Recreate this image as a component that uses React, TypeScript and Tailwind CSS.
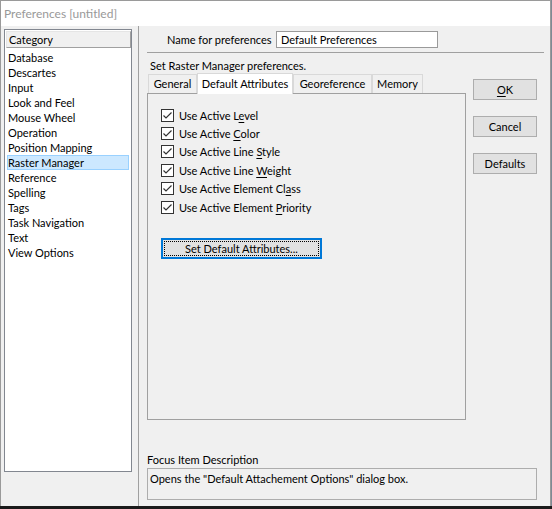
import React from "react"

const categories = [
  "Database",
  "Descartes",
  "Input",
  "Look and Feel",
  "Mouse Wheel",
  "Operation",
  "Position Mapping",
  "Raster Manager",
  "Reference",
  "Spelling",
  "Tags",
  "Task Navigation",
  "Text",
  "View Options",
]

// [before, mnemonic letter, after]
const options: [string, string, string][] = [
  ["Use Active L", "e", "vel"],
  ["Use Active ", "C", "olor"],
  ["Use Active Line ", "S", "tyle"],
  ["Use Active Line ", "W", "eight"],
  ["Use Active Element Cl", "a", "ss"],
  ["Use Active Element ", "P", "riority"],
]

const tabs = [
  { label: "General", w: "w-[49px]" },
  { label: "Default Attributes", w: "w-[96px]", active: true },
  { label: "Georeference", w: "w-[79px]" },
  { label: "Memory", w: "w-[51px]" },
]

function CheckBox() {
  return (
    <svg width="13" height="13" viewBox="0 0 13 13" className="shrink-0">
      <rect x="0.5" y="0.5" width="12" height="12" fill="#ffffff" stroke="#333333" />
      <path d="M2.5 6.5 L5 9 L10.5 3.5" fill="none" stroke="#333333" strokeWidth="1.2" />
    </svg>
  )
}

function DialogButton({ children }: { children: React.ReactNode }) {
  return (
    <div className="flex h-[21px] w-[64px] items-center justify-center border border-[#adadad] bg-[#e1e1e1] text-[#000]">
      {children}
    </div>
  )
}

export default function App() {
  return (
    <div className="flex h-[509px] w-[552px] flex-col whitespace-nowrap bg-[#7f8a94] font-['Lato',sans-serif] text-[11px] leading-[15px] text-black">
      <div className="mr-[1px] flex flex-1 flex-col border-x border-t border-[#9a9a9a] bg-[#f0f0f0]">
        {/* Title bar */}
        <div className="h-[25px] bg-white pl-[3px] text-[12px] leading-[25px] text-[#999999]">Preferences [untitled]</div>

        <div className="flex flex-1">
          {/* Category list */}
          <div className="w-[138px] border-r border-[#a0a0a0] pl-[3px] pt-[3px]">
            <div className="h-[443px] w-[128px] border border-[#828790] bg-white p-[1px]">
              <div className="h-[17px] w-[125px] border border-t-[#e5e5e5] border-l-[#e5e5e5] border-r-[#a0a0a0] border-b-[#a0a0a0] bg-[#f0f0f0] pl-[2px] leading-[15px]">
                Category
              </div>
              <div className="mt-[2px]">
                {categories.map((c) => (
                  <div
                    key={c}
                    className={
                      c === "Raster Manager"
                        ? "ml-[1px] h-[15px] w-[122px] border border-[#99d1ff] bg-[#cce8ff] leading-[13px]"
                        : "ml-[1px] h-[15px] w-[122px] border border-transparent leading-[13px]"
                    }
                  >
                    {c}
                  </div>
                ))}
              </div>
            </div>
          </div>

          {/* Right side */}
          <div className="flex flex-1 flex-col">
            <div className="flex items-center pl-[28px] pt-[5px]">
              <span className="w-[109px]">Name for preferences</span>
              <div className="h-[17px] w-[162px] border border-[#9a9a9a] bg-white pl-[4px]">Default Preferences</div>
            </div>

            <div className="ml-[8px] mt-[4px] h-[1px] w-[397px] bg-[#a0a0a0]" />

            <div className="mt-[5px] h-[15px] pl-[11px]">Set Raster Manager preferences.</div>

            <div className="flex">
              <div className="ml-[8px] w-[319px]">
                {/* Tab strip */}
                <div className="flex h-[20px] items-end pl-[1px]">
                  {tabs.map((t) => (
                    <div
                      key={t.label}
                      className={
                        t.active
                          ? `${t.w} relative z-10 -mb-[1px] flex h-[21px] justify-center border border-b-0 border-[#d9d9d9] bg-white pt-[2px]`
                          : `${t.w} flex h-[19px] justify-center border border-b-0 border-[#d9d9d9] bg-[#f0f0f0] pt-[1px]`
                      }
                    >
                      {t.label}
                    </div>
                  ))}
                </div>

                {/* Tab panel */}
                <div className="h-[327px] border border-[#a0a0a0] pl-[13px] pt-[12px]">
                  {options.map(([a, u, b]) => (
                    <div key={a + u} className="flex h-[18.4px] items-center gap-[5px]">
                      <CheckBox />
                      <span>
                        {a}
                        <u className="underline-offset-2">{u}</u>
                        {b}
                      </span>
                    </div>
                  ))}

                  <div className="mt-[22px] flex h-[21px] w-[161px] border-2 border-[#0078d7] bg-[#e1e1e1] p-[1px]">
                    <div className="flex flex-1 items-center justify-center border border-dotted border-black">
                      Set Default Attributes...
                    </div>
                  </div>
                </div>
              </div>

              <div className="ml-[7px] mt-[6px] flex flex-col gap-[16px]">
                <DialogButton>
                  <u className="underline-offset-2">O</u>K
                </DialogButton>
                <DialogButton>Cancel</DialogButton>
                <DialogButton>Defaults</DialogButton>
              </div>
            </div>

            <div className="ml-[8px] mt-[32px] h-[15px]">Focus Item Description</div>
            <div className="ml-[8px] mt-[1px] h-[32px] w-[390px] border border-[#adadad] pl-[2px] pt-[2px]">
              Opens the "Default Attachement Options" dialog box.
            </div>
          </div>
        </div>
      </div>
      <div className="h-[3px] bg-[#1a1a1a]" />
    </div>
  )
}
